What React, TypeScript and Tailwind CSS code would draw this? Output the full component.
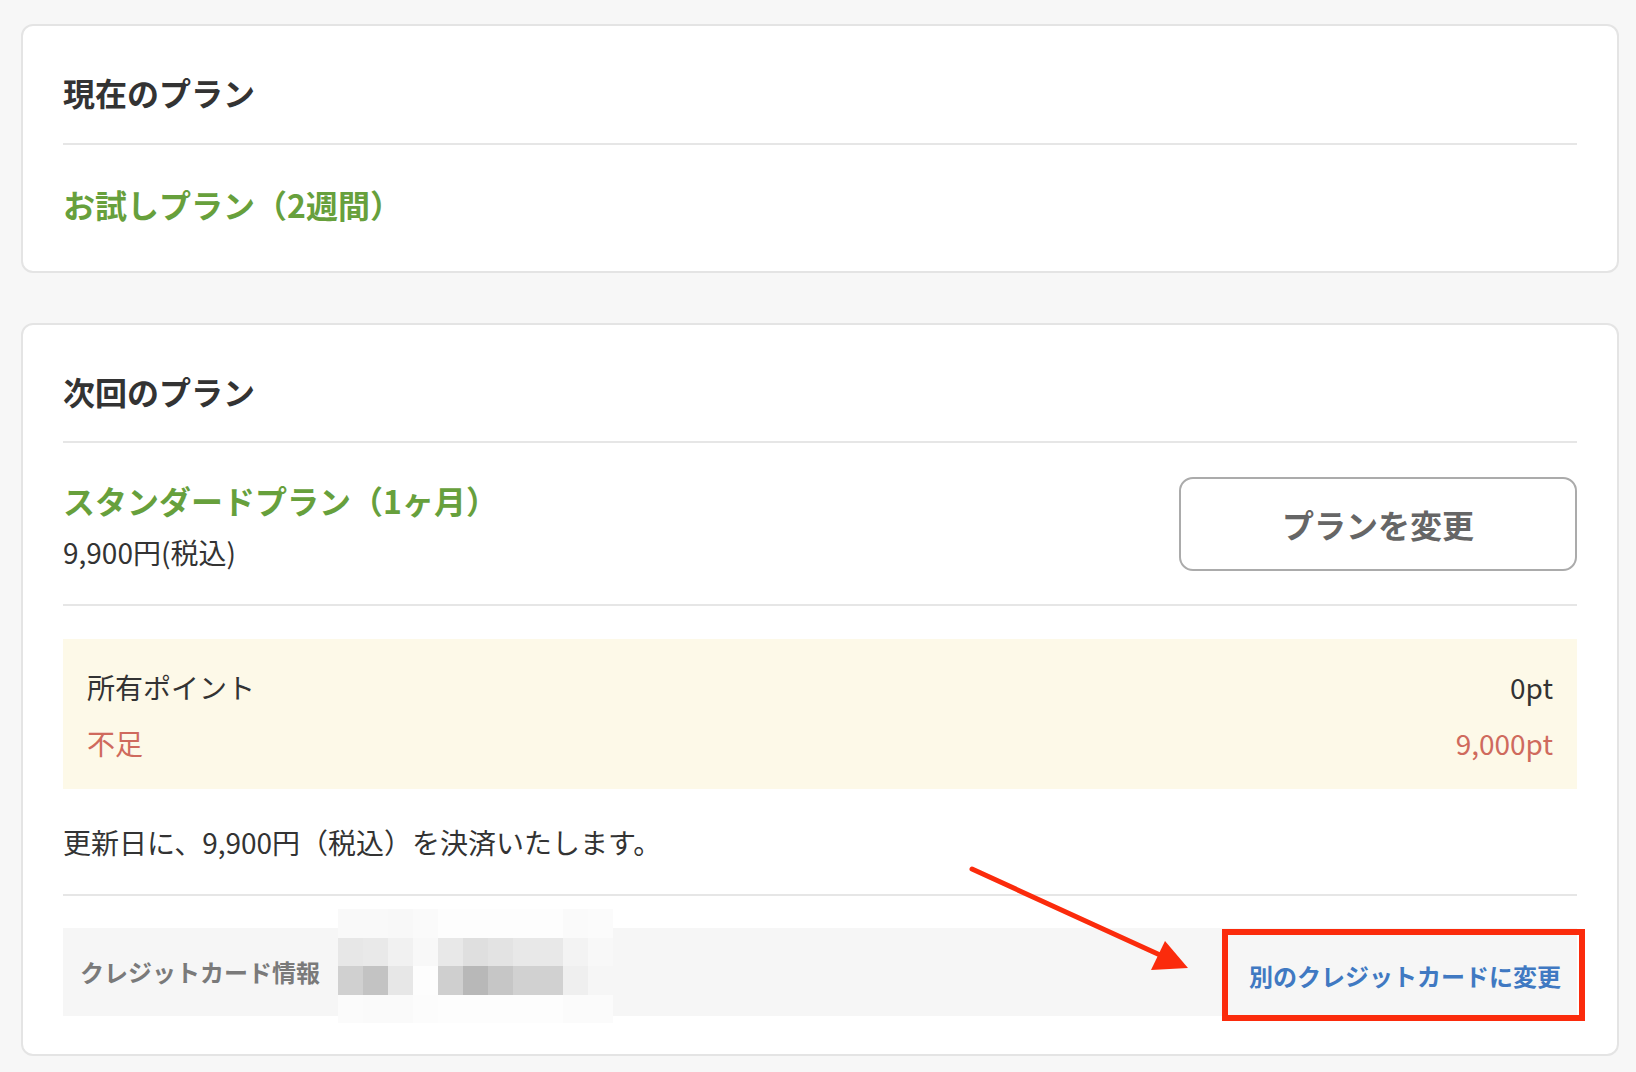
const MOSAIC: string[][] = [
  ["#f9f9f9", "#f9f9f9", "#f8f8f8", "#fafafa", "#fdfdfd", "#fdfdfd", "#fdfdfd", "#fdfdfd", "#fdfdfd", "#fafafa", "#fbfbfb"],
  ["#e7e7e7", "#e9e9e9", "#f1f1f1", "#f8f8f8", "#e8e8e8", "#dfdfdf", "#e3e3e3", "#e8e8e8", "#e8e8e8", "#f3f3f3", "#f8f8f8"],
  ["#d0d0d0", "#c3c3c3", "#e7e7e7", "#fdfdfd", "#cfcfcf", "#b8b8b8", "#c6c6c6", "#d1d1d1", "#d1d1d1", "#efefef", "#f6f6f6"],
  ["#fbfbfb", "#fafafa", "#fafafa", "#fcfcfc", "#fdfdfd", "#fdfdfd", "#fdfdfd", "#fdfdfd", "#fdfdfd", "#fbfbfb", "#fbfbfb"],
];

function Divider() {
  return <div className="h-[2px] bg-[#e6e6e6]" />;
}

function CardMosaic() {
  return (
    <div className="absolute left-[275px] -top-[19px] grid h-[114px] w-[275px] grid-cols-[repeat(11,25px)] grid-rows-[repeat(4,28.5px)]">
      {MOSAIC.flatMap((row, r) =>
        row.map((c, i) => <div key={`${r}-${i}`} style={{ backgroundColor: c }} />)
      )}
    </div>
  );
}

export default function App() {
  return (
    <div className="relative min-h-screen bg-[#f7f7f7] pb-[20px] pl-[21px] pr-[17px] pt-[24px] font-['Noto_Sans_CJK_JP','Noto_Sans',sans-serif] text-[#333]">
      {/* current plan */}
      <section className="rounded-[12px] border-2 border-[#e4e4e4] bg-white px-[40px] pb-[43px] pt-[42px]">
        <h2 className="pb-[27px] text-[32px] font-bold leading-[48px] text-[#333]">現在のプラン</h2>
        <Divider />
        <p className="mt-[35px] text-[32px] font-bold leading-[48px] text-[#67a03c]">お試しプラン（2週間）</p>
      </section>

      {/* next plan */}
      <section className="mt-[50px] rounded-[12px] border-2 border-[#e4e4e4] bg-white px-[40px] pb-[38px] pt-[42px]">
        <h2 className="pb-[26px] text-[32px] font-bold leading-[48px] text-[#333]">次回のプラン</h2>
        <Divider />

        <div className="flex items-center justify-between pb-[32px] pt-[33px]">
          <div className="flex flex-col">
            <p className="text-[32px] font-bold leading-[48px] text-[#67a03c]">スタンダードプラン（1ヶ月）</p>
            <p className="mt-[8px] text-[28px] leading-[40px] text-[#333]">9,900円(税込)</p>
          </div>
          <button className="flex h-[94px] w-[398px] items-center justify-center rounded-[14px] border-2 border-[#ababab] bg-white text-[32px] font-bold text-[#666]">
            プランを変更
          </button>
        </div>
        <Divider />

        <div className="mt-[33px] bg-[#fdf9e8] px-[24px] pb-[26px] pt-[28px] text-[28px] leading-[40px]">
          <div className="flex justify-between text-[#333]">
            <span>所有ポイント</span>
            <span>0pt</span>
          </div>
          <div className="mt-[16px] flex justify-between text-[#cf6a5d]">
            <span>不足</span>
            <span>9,000pt</span>
          </div>
        </div>

        <p className="mb-[32px] mt-[33px] text-[28px] leading-[40px] text-[#333]">
          更新日に、9,900円（税込）を決済いたします。
        </p>
        <Divider />

        <div className="relative mt-[32px] flex h-[88px] items-center justify-between bg-[#f6f6f6] pl-[17px] pr-[16px]">
          <span className="text-[24px] font-bold leading-[36px] text-[#7a7a7a]">クレジットカード情報</span>
          <CardMosaic />
          <div className="relative pt-[8px]">
            <a className="block text-[24px] font-bold leading-[36px] text-[#4079c2]">別のクレジットカードに変更</a>
            <div className="pointer-events-none absolute -bottom-[27px] -left-[27px] -right-[24px] -top-[21px] border-[6px] border-[#fb2b0c]" />
          </div>
        </div>
      </section>

      {/* callout arrow */}
      <svg
        className="pointer-events-none absolute left-[960px] top-[860px]"
        width="240"
        height="120"
        viewBox="0 0 240 120"
      >
        <line x1="12" y1="9" x2="200" y2="95" stroke="#fb2b0c" strokeWidth="5" strokeLinecap="round" />
        <polygon points="205,81 228,108 191,110" fill="#fb2b0c" />
      </svg>
    </div>
  );
}
